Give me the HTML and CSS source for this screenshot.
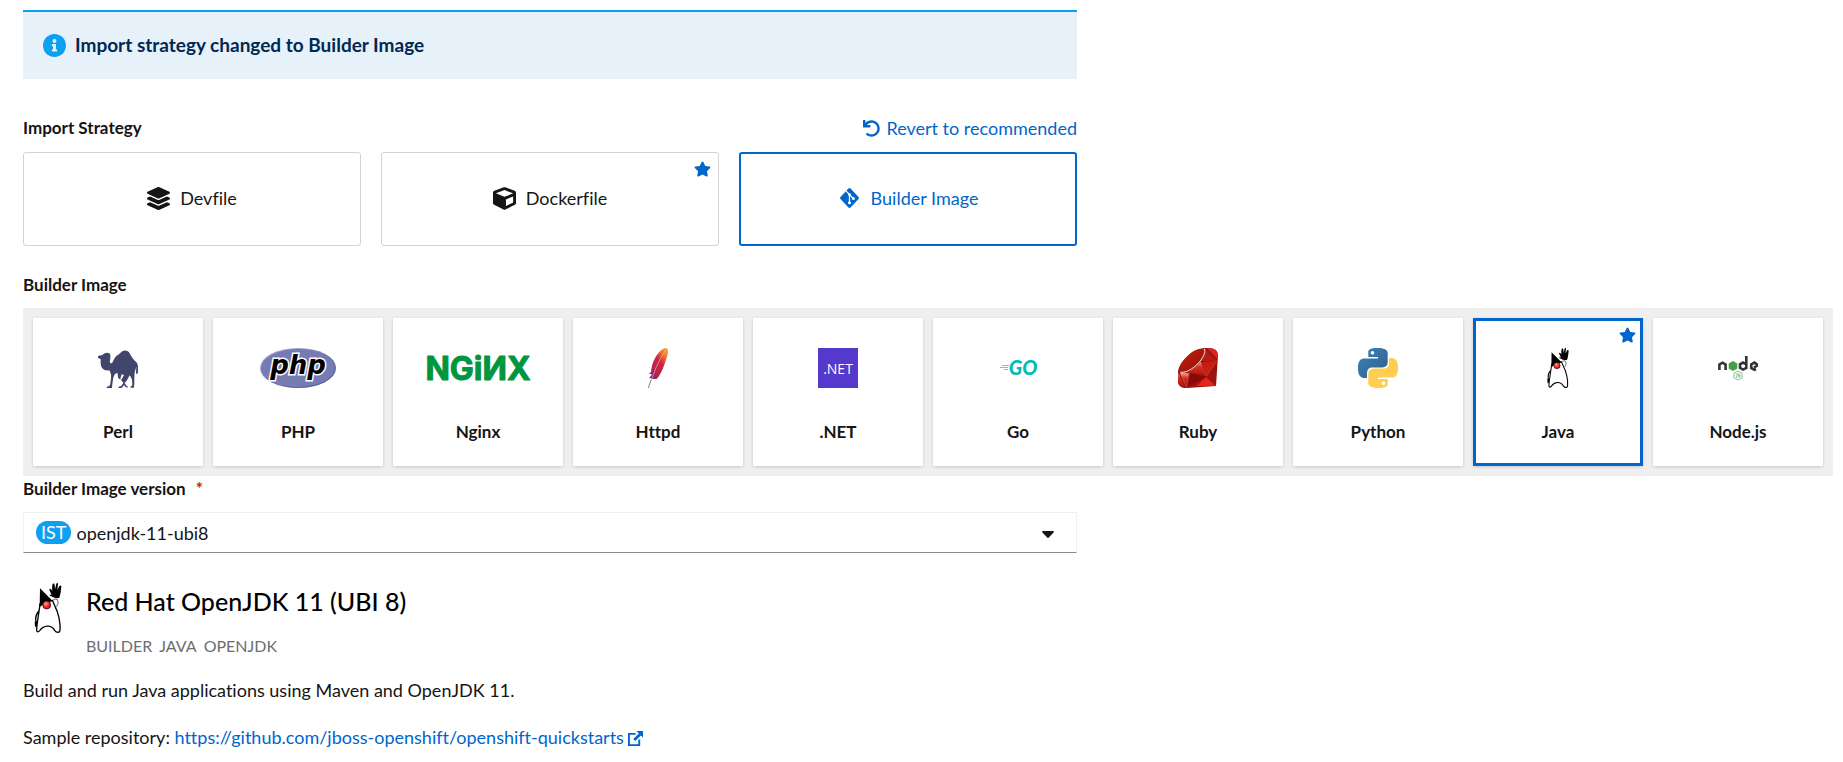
FILE: index.html
```html
<!DOCTYPE html>
<html lang="en">
<head>
<meta charset="utf-8">
<title>Import from Git</title>
<link rel="stylesheet" href="styles.css">
</head>
<body>
<svg class="defs" aria-hidden="true">
  <defs>
    <symbol id="star" viewBox="0 0 576 512"><path d="M259.3 17.8L194 150.2 47.9 171.5c-26.2 3.8-36.7 36.1-17.7 54.6l105.7 103-25 145.5c-4.5 26.3 23.2 46 46.4 33.7L288 439.6l130.7 68.7c23.2 12.2 50.9-7.4 46.4-33.7l-25-145.5 105.7-103c19-18.5 8.5-50.8-17.7-54.6L382 150.2 316.7 17.8c-11.7-23.6-45.6-23.9-57.4 0z" fill="currentColor"/></symbol>
    <radialGradient id="nose" cx=".4" cy=".35" r=".65"><stop offset="0" stop-color="#ff9a92"/><stop offset=".5" stop-color="#f03a34"/><stop offset="1" stop-color="#b80f12"/></radialGradient>
    <symbol id="duke" viewBox="0 0 84 150">
      <path d="M14 84C5 96 4 112 7 121" fill="none" stroke="#000" stroke-width="4"/>
      <path d="M2 117l6-3 1 14-6 5z"/>
      <path d="M56 61c-4-8 4-14 13-13 5 10 4 18-4 24" fill="#fff" stroke="#000" stroke-width="2"/>
      <path d="M18 62C15 92 8 122 8 142c0 6 5 6 9 1 12-17 35-19 45-1 5 8 15 8 16 0 2-22-5-54-15-72l-8-18z" fill="#fff" stroke="#000" stroke-width="4" stroke-linejoin="round"/>
      <path d="M18 16l38 38-22 6-17 12z"/>
      <path d="M53 35c-3-5-7-12-7-16 2-4 6 0 9 5-1-7-1-16 1-21 3-3 6-1 6 3l1 13 4-17c2-3 6-2 5 2l-2 17 6-12c3-3 6-2 6 1-1 9-2 25-6 34-6 2-16 0-21-3-5-2-8-2-8-5 0-4 4 0 6-1z"/>
      <circle cx="38" cy="66" r="12" fill="url(#nose)" stroke="#300" stroke-width="2"/>
    </symbol>
  </defs>
</svg>
<main class="page">
  <div class="form-col">
    <div class="alert" role="status">
      <svg class="alert-icon" viewBox="8 8 496 496" aria-hidden="true"><path fill="currentColor" d="M256 8C119.043 8 8 119.083 8 256c0 136.997 111.043 248 248 248s248-111.003 248-248C504 119.083 392.957 8 256 8zm0 110c23.196 0 42 18.804 42 42s-18.804 42-42 42-42-18.804-42-42 18.804-42 42-42zm56 254c0 6.627-5.373 12-12 12h-88c-6.627 0-12-5.373-12-12v-24c0-6.627 5.373-12 12-12h12v-64h-12c-6.627 0-12-5.373-12-12v-24c0-6.627 5.373-12 12-12h64c6.627 0 12 5.373 12 12v100h12c6.627 0 12 5.373 12 12v24z"/></svg>
      <h2 class="alert-title">Import strategy changed to Builder Image</h2>
    </div>
    <div class="strategy-head">
      <h3 class="label" id="strategy-label">Import Strategy</h3>
      <button type="button" class="revert">
        <svg class="revert-icon" viewBox="0 0 512 512" aria-hidden="true"><path fill="currentColor" d="M212.333 224.333H12c-6.627 0-12-5.373-12-12V12C0 5.373 5.373 0 12 0h48c6.627 0 12 5.373 12 12v78.112C117.773 39.279 184.26 7.47 258.175 8.007c136.906.994 246.448 111.623 246.157 248.532C504.041 393.258 393.12 504 256.333 504c-64.089 0-122.496-24.313-166.51-64.215-5.099-4.622-5.334-12.554-.467-17.42l33.967-33.967c4.474-4.474 11.662-4.717 16.401-.525C170.76 415.336 211.58 432 256.333 432c97.268 0 176-78.716 176-176 0-97.267-78.716-176-176-176-58.496 0-110.28 28.476-142.274 72.333h98.274c6.627 0 12 5.373 12 12v48c0 6.627-5.373 12-12 12z"/></svg>
        <span>Revert to recommended</span>
      </button>
    </div>
    <div class="strategies" role="group" aria-labelledby="strategy-label">
      <button type="button" class="strategy">
        <svg class="strategy-icon" viewBox="0 0 512 512" aria-hidden="true"><path fill="currentColor" d="M12.41 148.02l232.94 105.67c6.8 3.09 14.49 3.09 21.29 0l232.94-105.67c16.55-7.51 16.55-32.52 0-40.03L266.65 2.31a25.607 25.607 0 0 0-21.29 0L12.41 107.98c-16.55 7.51-16.55 32.53 0 40.04zm487.18 88.28l-58.09-26.33-161.64 73.27c-7.56 3.43-15.59 5.17-23.86 5.17s-16.29-1.74-23.86-5.17L70.51 209.97l-58.1 26.33c-16.55 7.5-16.55 32.5 0 40l232.94 105.59c6.8 3.08 14.49 3.08 21.29 0L499.59 276.3c16.55-7.5 16.55-32.5 0-40zm0 127.8l-57.87-26.23-161.86 73.37c-7.56 3.43-15.59 5.17-23.86 5.17s-16.29-1.74-23.86-5.17L70.29 337.87 12.41 364.1c-16.55 7.5-16.55 32.5 0 40l232.94 105.59c6.8 3.08 14.49 3.08 21.29 0L499.59 404.1c16.55-7.5 16.55-32.5 0-40z"/></svg>
        <span>Devfile</span>
      </button>
      <button type="button" class="strategy">
        <svg class="strategy-icon" viewBox="0 0 512 512" aria-hidden="true"><path fill="currentColor" d="M239.1 6.3l-208 78c-18.7 7-31.1 25-31.1 45v225.1c0 18.2 10.3 34.8 26.5 42.9l208 104c13.5 6.8 29.4 6.8 42.9 0l208-104c16.3-8.1 26.5-24.8 26.5-42.9V129.3c0-20-12.4-37.9-31.1-44.9l-208-78C262 2.2 250 2.2 239.1 6.3zM256 68.4l192 72v1.1l-192 78-192-78v-1.1l192-72zm32 356V275.5l160-65v133.9l-160 80z"/></svg>
        <span>Dockerfile</span>
        <svg class="star" role="img" aria-label="Recommended"><use href="#star"/></svg>
      </button>
      <button type="button" class="strategy selected" aria-pressed="true">
        <svg class="strategy-icon" viewBox="0 0 24 24" aria-hidden="true"><path d="M10.900 1.600a1.600 1.600 0 0 1 2.200 0l8.300 8.800a1.600 1.600 0 0 1 0 2.200l-8.300 8.800a1.600 1.600 0 0 1-2.200 0l-8.300-8.800a1.600 1.600 0 0 1 0-2.200z" fill="currentColor"/><path d="M8.500 4.300l3.500 3.500v9M12 8l4 4" stroke="#fff" stroke-width="1.300" fill="none"/><circle cx="12" cy="8" r="1.500" fill="#fff"/><circle cx="16" cy="12" r="1.600" fill="#fff"/><circle cx="12" cy="16.500" r="1.600" fill="#fff"/></svg>
        <span>Builder Image</span>
      </button>
    </div>
  </div>

  <h3 class="label builder-label" id="builder-label">Builder Image</h3>
  <div class="builders" role="group" aria-labelledby="builder-label">
    <button type="button" class="tile">
      <svg class="logo" viewBox="234 144 120 120" aria-hidden="true"><path fill="#41456b" d="M234 168c2-2 10-1 14-4 5-5 14-8 20-4 5 4 3 14 2 21-1 5-1 9 3 9 6 0 7-12 14-20 6-6 9-6 14-11 9-10 22-10 28 1 6 12 11 18 17 24 5 4 8 9 8 18v14c-2 7-5 8-6 3l1-19-5 17c-1 10-1 21-1 36-1 6-1 8-1 10h-11c0-4 5-5 6-8l-1-16c-1-5-5-9-7-13l-9 16-6 7 6 10c5 0 4 3 1 4-4-1-7-4-9-8l-7 9h-10c1-4 4-5 8-5l7-10-8-11c-5-3-9-3-8-9l-2-11-7 4c-6 8-6 19-8 30l-1 12h-17c1-4 7-5 11-8 2-11 4-23 3-33-2-4-3-10-5-12-10 2-18-1-23-9-4-7-3-16-3-24-3-4-9-2-10-10z"/><path fill="#fff" d="M301 236l4-13 7 2-8 14z"/></svg>
      <span>Perl</span>
    </button>
    <button type="button" class="tile">
      <svg class="logo wide" viewBox="0 0 76 40" aria-hidden="true"><defs><linearGradient id="phpEdge" x1="0" y1="0" x2="1" y2="1"><stop offset="0" stop-color="#c0c4e2"/><stop offset=".5" stop-color="#777bb3"/><stop offset="1" stop-color="#3d4483"/></linearGradient></defs><ellipse cx="38" cy="20" rx="38" ry="20" fill="url(#phpEdge)"/><ellipse cx="38" cy="20" rx="37" ry="19" fill="#777bb3"/><text x="38" y="26" class="php">php</text></svg>
      <span>PHP</span>
    </button>
    <button type="button" class="tile">
      <svg class="logo wide" viewBox="0 0 116 40" aria-hidden="true"><text x="58" y="32" class="nginx">NGiИX</text></svg>
      <span>Nginx</span>
    </button>
    <button type="button" class="tile">
      <svg class="logo" viewBox="744 144 120 120" aria-hidden="true"><defs><linearGradient id="feather" x1=".9" y1="0" x2=".1" y2="1"><stop offset="0" stop-color="#f8a13a"/><stop offset=".2" stop-color="#f0752f"/><stop offset=".42" stop-color="#cf2343"/><stop offset=".7" stop-color="#bd2549"/><stop offset="1" stop-color="#6b2e80"/></linearGradient></defs><path fill="url(#feather)" d="M824 145c7-3 11 4 10 11 0 12-7 26-11 38-6 16-12 30-22 42-8 3-16 0-23-3 3-4 7-5 7-10-4-2-8-1-7-3l5-3c1-16 5-31 14-46 8-12 15-22 27-26z"/><path d="M828 150c-15 20-29 47-37 72-5 15-12 29-15 41" fill="none" stroke="#efb4b6" stroke-width="2"/><path d="M784 239c-4 9-7 16-9 25" fill="none" stroke="#8c83b0" stroke-width="3"/></svg>
      <span>Httpd</span>
    </button>
    <button type="button" class="tile">
      <svg class="logo" viewBox="0 0 40 40" aria-hidden="true"><rect width="40" height="40" fill="#5439cc"/><text x="20" y="26" class="dotnet">.NET</text></svg>
      <span>.NET</span>
    </button>
    <button type="button" class="tile">
      <svg class="logo" viewBox="0 0 40 40" aria-hidden="true"><path d="M4 17.500h7M2 19.500h8M6 21.500h4" stroke="#5fd0c9" stroke-width="1"/><text x="25" y="27" class="go">GO</text></svg>
      <span>Go</span>
    </button>
    <button type="button" class="tile">
      <svg class="logo" viewBox="234 144 120 120" aria-hidden="true"><defs><linearGradient id="ruby" x1="0" y1="0" x2="1" y2="1"><stop offset="0" stop-color="#c8240f"/><stop offset="1" stop-color="#8f0a08"/></linearGradient><linearGradient id="facet" x1="0" y1="0" x2="0" y2="1"><stop offset="0" stop-color="#f4a493"/><stop offset=".35" stop-color="#d63020"/><stop offset="1" stop-color="#a81410"/></linearGradient></defs><path fill="#9c1410" d="M234 215c3-18 12-32 29-48 18-17 35-23 57-23 20 0 34 5 34 23l-6 91-87 6c-18 1-29-8-27-25z"/><path fill="url(#ruby)" d="M241 207c1-18 18-38 38-50 16-10 31-13 34-7 3 9-5 25-18 40-16 18-34 29-46 29-6-1-8-5-8-12z"/><path fill="url(#facet)" d="M302 185l16 43-49-11z"/><path fill="url(#facet)" d="M240 219l27 1-9 42z"/><path fill="url(#facet)" d="M235 218l20 43c-13 0-21-9-21-23z"/><path fill="#b81b12" d="M316 151l34 31-44 1z"/><path fill="#da271c" d="M321 145c19-1 31 5 32 18l-1 15z"/><path fill="#c91d15" d="M307 187l43-4-30 44z"/><path fill="#8b0907" d="M269 220l50 10-57 32z"/><path fill="#e8241b" d="M318 232l29 25-58 1z"/><path d="M313 146c5 11-4 28-17 42-18 21-44 33-55 28" fill="none" stroke="#fff0ec" stroke-width="3"/><path d="M302 186l17 43 31-46m-34-33l-13 36-35 33m-27 0l18 43m9-43l-8 43" fill="none" stroke="#e58374" stroke-width="1"/></svg>
      <span>Ruby</span>
    </button>
    <button type="button" class="tile">
      <svg class="logo" viewBox="0 0 24 24" aria-hidden="true"><defs><linearGradient id="pyBlue" x1="0" y1="0" x2="1" y2="1"><stop offset="0" stop-color="#3a83b9"/><stop offset="1" stop-color="#315f87"/></linearGradient><path id="snake" d="M14.250.180l.9.200.730.260.590.300.450.320.340.340.250.340.160.330.100.300.040.260.020.200-.010.130V8.500l-.050.630-.130.550-.210.460-.260.380-.300.310-.330.250-.350.190-.350.140-.330.100-.300.070-.260.040-.210.020H8.770l-.690.050-.590.140-.500.220-.410.270-.330.320-.270.350-.200.360-.150.370-.100.350-.070.320-.040.270-.020.210v3.060H3.170l-.210-.030-.280-.070-.320-.120-.350-.180-.360-.260-.360-.360-.350-.460-.320-.590-.280-.730-.210-.880-.140-1.050-.050-1.230.060-1.220.160-1.040.240-.870.320-.710.360-.570.400-.440.420-.330.420-.240.400-.160.360-.100.320-.050.240-.010h.160l.060.010h8.160v-.830H6.180l-.010-2.750-.020-.370.050-.340.110-.310.170-.280.250-.260.310-.230.380-.200.440-.180.510-.150.580-.120.640-.100.710-.060.770-.040.840-.020 1.270.050zm-6.300 1.980l-.230.330-.080.410.080.410.230.340.330.220.410.090.410-.090.330-.220.230-.340.080-.410-.080-.410-.230-.330-.330-.220-.410-.090-.410.090z"/></defs><use href="#snake" fill="url(#pyBlue)"/><use href="#snake" fill="#ffce50" transform="rotate(180 12 12)"/></svg>
      <span>Python</span>
    </button>
    <button type="button" class="tile selected" aria-pressed="true">
      <svg class="logo" aria-hidden="true"><use href="#duke"/></svg>
      <span>Java</span>
      <svg class="star" role="img" aria-label="Recommended"><use href="#star"/></svg>
    </button>
    <button type="button" class="tile">
      <svg class="logo" viewBox="0 0 40 40" aria-hidden="true"><g fill="none" stroke="#333" stroke-width="2.600"><path d="M1.400 22v-5.500l3.100-1.800 3.100 1.800V22"/><path d="M28.300 8v12l-3.300 1.600-3-1.800v-3.500l3-1.800 3.300 1.800"/><path d="M38 21l-1.600.800-3.200-1.900v-3.500l3.200-1.800 2.600 1.700-.1 1.500-3 1.500"/></g><path d="M15 13l4.300 2.500v5L15 23l-4.300-2.500v-5z" fill="#43a047"/><path d="M20 23l4 2.300v4.600L20 32l-4-2.100v-4.600zm-1 2v4l-1 1m4-4h-1.500v1.500H22V29h-2" fill="none" stroke="#7cb884" stroke-width=".9"/></svg>
      <span>Node.js</span>
    </button>
  </div>

  <div class="form-col">
    <label class="label version-label" for="version">Builder Image version <span class="required" aria-hidden="true">*</span></label>
    <div class="select-box">
      <span class="badge">IST</span>
      <select id="version" class="select"><option>openjdk-11-ubi8</option></select>
      <svg class="caret" viewBox="0 0 12 7" aria-hidden="true"><path d="M1.200 0h9.600c1 0 1.400.9.800 1.500L6.800 6.500a1 1 0 0 1-1.600 0L.4 1.500C-.2.9.2 0 1.200 0z" fill="#151515"/></svg>
    </div>
    <section class="details">
      <svg class="details-logo" aria-hidden="true"><use href="#duke"/></svg>
      <div>
        <h1 class="details-title">Red Hat OpenJDK 11 (UBI 8)</h1>
        <p class="tags"><span>BUILDER</span><span>JAVA</span><span>OPENJDK</span></p>
      </div>
    </section>
    <p class="text">Build and run Java applications using Maven and OpenJDK 11.</p>
    <p class="text">Sample repository: <a class="link" href="https://github.com/jboss-openshift/openshift-quickstarts">https://github.com/jboss-openshift/openshift-quickstarts<svg class="external" viewBox="0 0 16 16" aria-hidden="true"><path d="M8 3H1v12h11V9" fill="none" stroke="currentColor" stroke-width="2"/><path d="M9 0h7v7l-2.300-2.300-6 6-2.100-2.100 6-6z" fill="currentColor"/></svg></a></p>
  </div>
</main>
</body>
</html>
```
FILE: styles.css
```css
* { box-sizing: border-box; }

body {
  margin: 0;
  background: #fff;
  color: #151515;
  font-family: Lato, "Open Sans", sans-serif;
  font-size: 18px;
  font-variant-ligatures: none;
  line-height: 24px;
}

h1, h2, h3, p { margin: 0; }

button {
  font: inherit;
  color: inherit;
  cursor: pointer;
}

.defs {
  position: absolute;
  width: 0;
  height: 0;
}

.page { padding: 10px 10px 0 23px; }

.form-col { max-width: 1054px; }

.alert {
  display: flex;
  align-items: center;
  gap: 9px;
  padding: 21px 20px 22px;
  border-top: 2px solid #0d9ff0;
  background: #e7f1fa;
}

.alert-icon {
  width: 23px;
  height: 23px;
  color: #0d9ff0;
}

.alert-title {
  font-size: 19px;
  font-weight: 700;
  line-height: 24px;
  color: #002952;
}

.label {
  font-size: 17px;
  font-weight: 700;
  line-height: 24px;
}

.strategy-head {
  display: flex;
  justify-content: space-between;
  padding: 37px 0 12px;
}

.revert {
  display: flex;
  align-items: center;
  gap: 6px;
  padding: 0;
  border: 0;
  background: none;
  color: #06c;
}

.revert-icon {
  width: 17px;
  height: 17px;
}

.strategies {
  display: grid;
  grid-template-columns: repeat(3, 1fr);
  gap: 20px;
}

.strategy {
  position: relative;
  display: flex;
  align-items: center;
  justify-content: center;
  gap: 10px;
  min-height: 94px;
  padding-bottom: 3px;
  border: 1px solid #d2d2d2;
  border-radius: 3px;
  background: #fff;
}

.strategy.selected {
  border: 2px solid #06c;
  color: #06c;
}

.strategy-icon {
  width: 23px;
  height: 23px;
}

.star {
  position: absolute;
  top: 8px;
  right: 7px;
  width: 17px;
  height: 16px;
  color: #06c;
}

.tile .star {
  top: 6px;
  right: 4px;
}

.builder-label { padding: 27px 0 11px; }

.builders {
  display: grid;
  grid-template-columns: repeat(auto-fill, minmax(170px, 1fr));
  gap: 10px;
  padding: 10px;
  background: #efefef;
}

.tile {
  position: relative;
  display: flex;
  flex-direction: column;
  align-items: center;
  gap: 34px;
  padding: 27px 0 21px;
  border: 3px solid transparent;
  background: #fff;
  background-clip: border-box;
  box-shadow: 0 1px 3px rgba(3, 3, 3, 0.16);
  font-size: 17px;
  font-weight: 700;
  line-height: 20px;
}

.tile.selected { border-color: #06c; }

.logo {
  width: 40px;
  height: 40px;
}

.logo.wide { width: auto; }

.php {
  font: italic 700 26px "DejaVu Sans", sans-serif;
  text-anchor: middle;
  stroke: #fff;
  stroke-width: 3px;
  paint-order: stroke;
}

.nginx {
  font: 700 32px Inter, sans-serif;
  text-anchor: middle;
  fill: #009640;
  stroke: #009640;
  stroke-linejoin: round;
}

.dotnet {
  font: 400 14px "Open Sans", sans-serif;
  text-anchor: middle;
  fill: #fff;
}

.go {
  font: italic 900 20px Lato, sans-serif;
  text-anchor: middle;
  fill: #00bdb4;
}

.version-label {
  display: block;
  padding: 1px 0 11px;
}

.required {
  margin-left: 6px;
  color: #c9190b;
}

.select-box {
  position: relative;
  display: flex;
  align-items: center;
  gap: 5px;
  padding: 0 12px;
  border: 1px solid #f0f0f0;
  border-bottom-color: #8a8d90;
}

.badge {
  padding: 0 5px;
  border-radius: 12px;
  background: #0d9ff0;
  color: #fff;
  line-height: 23px;
}

.select {
  flex: 1;
  height: 39px;
  padding: 0;
  border: 0;
  background: none;
  color: #151515;
  font: inherit;
  appearance: none;
}

.caret {
  position: absolute;
  top: 18px;
  right: 22px;
  width: 12px;
  height: 7px;
  pointer-events: none;
}

.details {
  display: flex;
  gap: 13px;
  padding-top: 30px;
}

.details-logo {
  width: 50px;
  height: 50px;
}

.details-title {
  font-size: 25px;
  font-weight: 500;
  line-height: 36px;
  color: #000;
}

.tags {
  display: flex;
  gap: 7px;
  padding-top: 15px;
  font-size: 16px;
  line-height: 24px;
  color: #6a6e73;
}

.text { padding-top: 23px; }

.details + .text { padding-top: 20px; }

.link {
  color: #06c;
  text-decoration: none;
}

.external {
  width: 15px;
  height: 15px;
  margin-left: 4px;
  vertical-align: -2px;
}
```
